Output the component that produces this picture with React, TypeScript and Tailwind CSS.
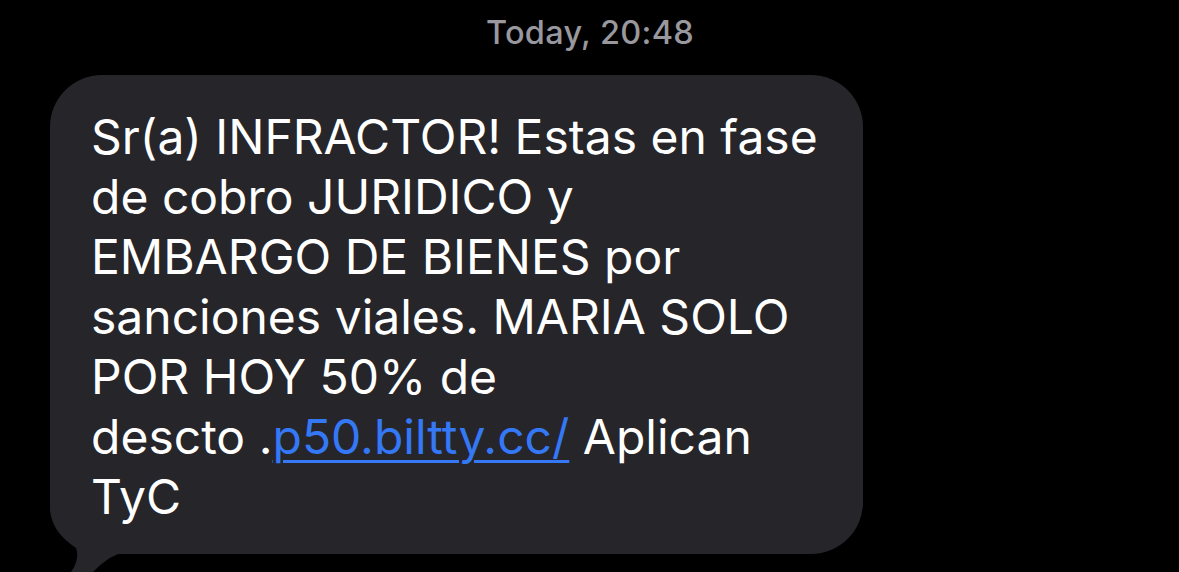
import React from "react";

export default function App() {
  const font = { fontFamily: "Inter, 'Noto Sans', sans-serif" };
  return (
    <div className="w-[1179px] h-[572px] bg-black overflow-hidden relative" style={font}>
      <div className="flex justify-center pt-[14px] pl-[1px]">
        <span className="text-[32.5px] leading-[38px] font-medium text-[#98989e] tracking-[0.3px]">
          Today, 20:48
        </span>
      </div>
      <div className="pl-[50px] pt-[23px]">
        <div className="relative w-[813px]">
          <svg
            className="absolute left-0 bottom-[-18px]"
            width="100"
            height="72"
            viewBox="0 0 100 72"
          >
            <path
              d="M0 0 L0 10 C2 30 15 40 26 48 C29 56 26 65 21 72 L43 72 C50 65 58 58 68 54 L100 54 L100 0 Z"
              fill="#26252a"
            />
          </svg>
          <div className="relative bg-[#26252a] rounded-[52px] pl-[41px] pr-[20px] pt-[32px] pb-[27px] text-white text-[48px] leading-[60px] whitespace-nowrap">
            <div>Sr(a) INFRACTOR! Estas en fase</div>
            <div>de cobro JURIDICO y</div>
            <div>EMBARGO DE BIENES por</div>
            <div>sanciones viales. MARIA SOLO</div>
            <div>POR HOY 50% de</div>
            <div>
              descto .
              <span className="text-[#3478f6] underline decoration-[3px] underline-offset-[6px]">
                p50.biltty.cc/
              </span>{" "}
              Aplican
            </div>
            <div>TyC</div>
          </div>
        </div>
      </div>
    </div>
  );
}
